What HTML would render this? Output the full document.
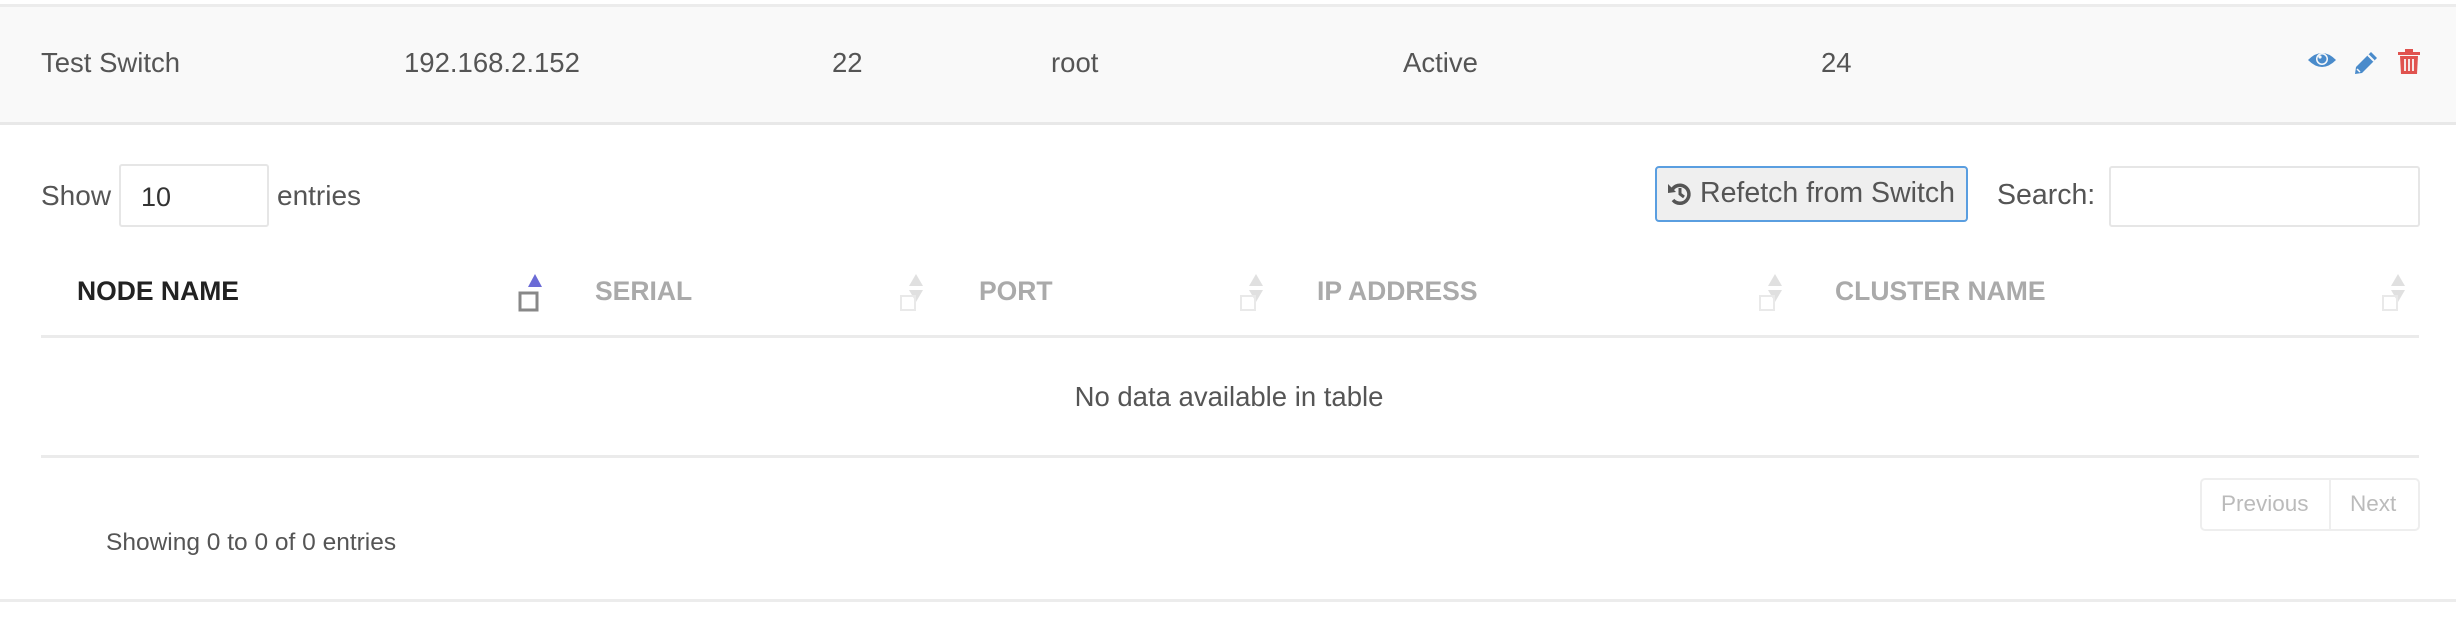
<!DOCTYPE html>
<html><head><style>
*{margin:0;padding:0;box-sizing:border-box}
body{width:2456px;height:618px;background:#fff;font-family:"Liberation Sans",sans-serif;color:#555;position:relative;overflow:hidden;font-size:27px}
.a{position:absolute;white-space:nowrap}
.row{position:absolute;left:0;top:4px;width:2456px;height:121px;background:#f9f9f9;border-top:3px solid #ececec;border-bottom:3px solid #e8e8e8}
.t{top:47px;line-height:32px;font-size:27.5px}
.h{top:275px;line-height:32px;font-weight:bold;color:#aaa;font-size:26.5px}
.line{position:absolute;left:41px;width:2378px;height:3px;background:#ebebeb}
</style></head><body>
<div class="row"></div>
<div class="a t" style="left:41px">Test Switch</div>
<div class="a t" style="left:404px">192.168.2.152</div>
<div class="a t" style="left:832px">22</div>
<div class="a t" style="left:1051px">root</div>
<div class="a t" style="left:1403px">Active</div>
<div class="a t" style="left:1821px">24</div>
<svg class="a" style="left:2306px;top:48px" width="32" height="24" viewBox="0 0 32 24"><path d="M2 12 Q16 -2 30 12 Q16 26 2 12Z" fill="#4a8bcb"/><circle cx="16" cy="11" r="6" fill="#f9f9f9"/><circle cx="16" cy="11" r="4.5" fill="#4a8bcb"/><circle cx="14" cy="9" r="1.6" fill="#f9f9f9"/></svg>
<svg class="a" style="left:2353px;top:50px" width="26" height="26" viewBox="0 0 26 26"><path d="M18 2 L24 8 L9 23 L2 24 L3 17Z" fill="#4a8bcb"/><path d="M15 5 L21 11" stroke="#f9f9f9" stroke-width="2"/><path d="M4 19 L7 22" stroke="#f9f9f9" stroke-width="1.5"/></svg>
<svg class="a" style="left:2397px;top:49px" width="24" height="26" viewBox="0 0 24 26"><rect x="1" y="3" width="22" height="3" fill="#e0534f"/><rect x="8" y="0" width="8" height="4" fill="#e0534f"/><path d="M3 7 H21 L20 25 H4Z" fill="#e0534f"/><path d="M8 10V22M12 10V22M16 10V22" stroke="#f9f9f9" stroke-width="1.8"/></svg>

<div class="a" style="left:41px;top:180px;line-height:32px;font-size:28px">Show</div>
<div class="a" style="left:119px;top:164px;width:150px;height:63px;border:2px solid #e6e6e6;border-radius:3px;padding:17px 0 0 20px;line-height:28px;color:#333;font-size:27px">10</div>
<div class="a" style="left:277px;top:180px;line-height:32px;font-size:28px">entries</div>

<div class="a" style="left:1655px;top:166px;width:313px;height:56px;border:2px solid #5a9ee0;border-radius:4px;background:#efefef;line-height:50px;padding-left:43px;color:#555;font-size:28.5px">Refetch from Switch</div>
<svg class="a" style="left:1667px;top:181px" width="26" height="26" viewBox="0 0 26 26"><path d="M5 9 A9 9 0 1 1 6 19" fill="none" stroke="#555" stroke-width="3.5"/><path d="M1 3 L9 11 L1 12Z" fill="#555"/><path d="M13 7 V13 L17 16" fill="none" stroke="#555" stroke-width="3"/></svg>
<div class="a" style="left:1997px;top:179px;line-height:32px;font-size:28.5px">Search:</div>
<div class="a" style="left:2109px;top:166px;width:311px;height:61px;border:2px solid #e6e6e6;border-radius:3px"></div>

<div class="a h" style="left:77px;color:#222">NODE NAME</div>
<svg class="a" style="left:517px;top:272px" width="28" height="40"><path d="M11 15 L18 2 L25 15Z" fill="#6b6bd6"/><rect x="3" y="21" width="17" height="17" fill="none" stroke="#888" stroke-width="3"/></svg>
<div class="a h" style="left:595px">SERIAL</div>
<svg class="a" style="left:898px;top:272px" width="28" height="40" opacity=".25"><path d="M11 14 L18 2 L25 14Z" fill="#888"/><path d="M11 18 L18 30 L25 18Z" fill="#888"/><rect x="3" y="24" width="14" height="14" fill="none" stroke="#aaa" stroke-width="2"/></svg>
<div class="a h" style="left:979px">PORT</div>
<svg class="a" style="left:1238px;top:272px" width="28" height="40" opacity=".25"><path d="M11 14 L18 2 L25 14Z" fill="#888"/><path d="M11 18 L18 30 L25 18Z" fill="#888"/><rect x="3" y="24" width="14" height="14" fill="none" stroke="#aaa" stroke-width="2"/></svg>
<div class="a h" style="left:1317px">IP ADDRESS</div>
<svg class="a" style="left:1757px;top:272px" width="28" height="40" opacity=".25"><path d="M11 14 L18 2 L25 14Z" fill="#888"/><path d="M11 18 L18 30 L25 18Z" fill="#888"/><rect x="3" y="24" width="14" height="14" fill="none" stroke="#aaa" stroke-width="2"/></svg>
<div class="a h" style="left:1835px">CLUSTER NAME</div>
<svg class="a" style="left:2380px;top:272px" width="28" height="40" opacity=".25"><path d="M11 14 L18 2 L25 14Z" fill="#888"/><path d="M11 18 L18 30 L25 18Z" fill="#888"/><rect x="3" y="24" width="14" height="14" fill="none" stroke="#aaa" stroke-width="2"/></svg>
<div class="line" style="top:335px"></div>

<div class="a" style="left:0;width:2456px;text-align:center;top:381px;line-height:32px;padding-left:2px;font-size:27.5px">No data available in table</div>
<div class="line" style="top:455px"></div>

<div class="a" style="left:2200px;top:478px;width:220px;height:53px;border:2px solid #eee;border-radius:5px"></div>
<div class="a" style="left:2329px;top:478px;width:2px;height:53px;background:#eee"></div>
<div class="a" style="left:2221px;top:491px;font-size:22.5px;color:#bbb;line-height:26px">Previous</div>
<div class="a" style="left:2350px;top:491px;font-size:22.5px;color:#bbb;line-height:26px">Next</div>
<div class="a" style="left:106px;top:529px;font-size:24.5px;line-height:28px">Showing 0 to 0 of 0 entries</div>
<div class="a" style="left:0;top:599px;width:2456px;height:3px;background:#ececec"></div>
</body></html>
